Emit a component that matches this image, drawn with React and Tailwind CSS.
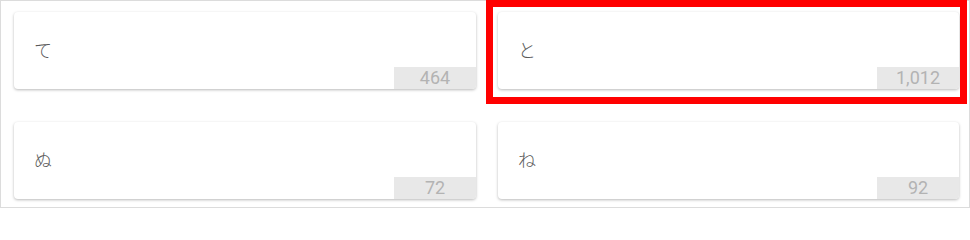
const items = [
  { kana: "て", count: "464" },
  { kana: "と", count: "1,012", marked: true },
  { kana: "ぬ", count: "72" },
  { kana: "ね", count: "92" },
];

const Card = ({ kana, count }) => (
  <div className="relative flex h-[77px] items-center overflow-hidden rounded-[4px] bg-white pl-5 shadow-[0_1px_3px_rgba(0,0,0,0.28)]">
    <span className="text-[18px] font-light text-[#5a5a5a]">{kana}</span>
    <div className="absolute bottom-0 right-0 flex h-[22px] w-[82px] items-center justify-center bg-[#e8e8e8] text-[18px] leading-none text-[#b3b3b3]">
      {count}
    </div>
  </div>
);

export default function App() {
  return (
    <div
      className="relative h-[208px] w-[970px] border border-[#dcdcdc] bg-white pl-[13px] pt-[11px]"
      style={{ fontFamily: "Roboto, 'Noto Sans CJK JP', sans-serif" }}
    >
      <div className="grid grid-cols-[462px_461px] gap-x-[22px] gap-y-[33px]">
        {items.map((it) => (
          <Card key={it.kana} kana={it.kana} count={it.count} />
        ))}
      </div>
      {/* highlight box round the second card */}
      <div className="pointer-events-none absolute left-[485px] top-[-1px] h-[104px] w-[481px] border-[7px] border-[#ff0000]" />
    </div>
  );
}
